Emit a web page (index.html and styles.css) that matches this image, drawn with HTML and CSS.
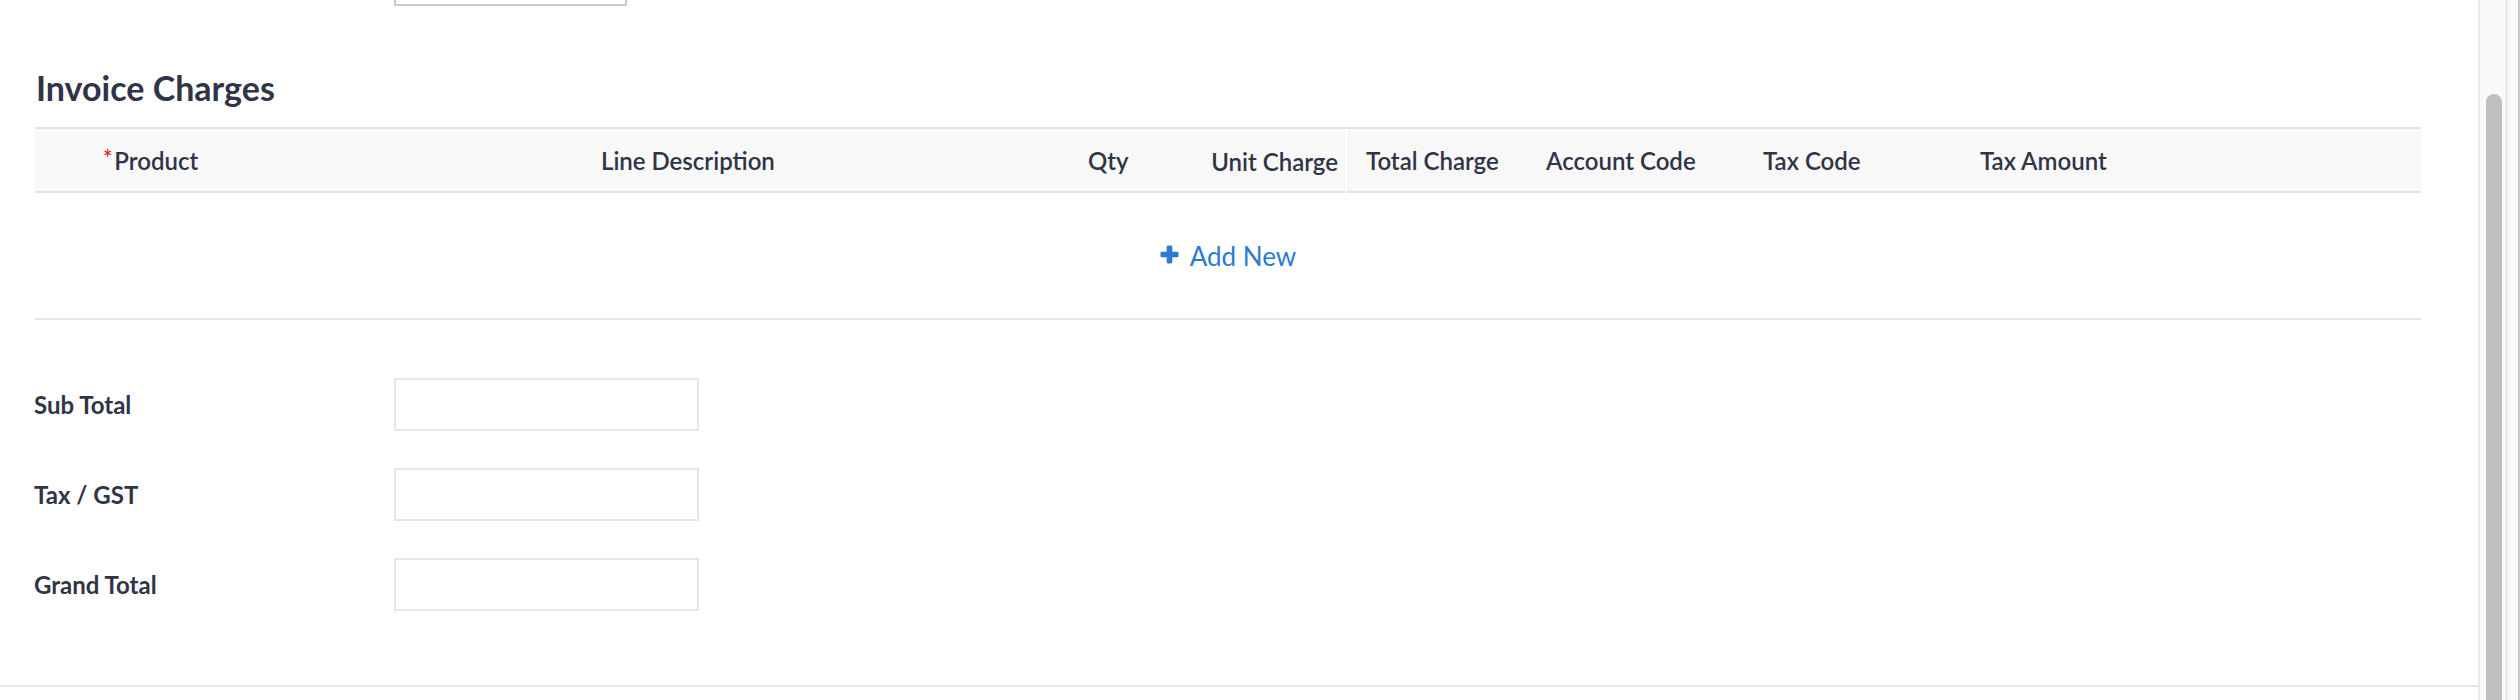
FILE: index.html
```html
<!DOCTYPE html>
<html lang="en">
<head>
    <meta charset="UTF-8">
    <meta name="viewport" content="width=device-width, initial-scale=1.0">
    <title>Invoice Charges</title>
    <link rel="stylesheet" href="styles.css">
</head>
<body>
    <div class="page">
        <div class="content">
            <div class="prev-field">
                <div class="prev-box"></div>
            </div>

            <h2 class="section-title">Invoice Charges</h2>

            <div class="charges">
                <div class="charges-head">
                    <div class="cell cell-product"><span class="required">*</span>Product</div>
                    <div class="cell">Line Description</div>
                    <div class="cell">Qty</div>
                    <div class="cell cell-unit">Unit Charge</div>
                    <div class="cell cell-total">Total Charge</div>
                    <div class="cell">Account Code</div>
                    <div class="cell">Tax Code</div>
                    <div class="cell">Tax Amount</div>
                </div>
                <div class="add-row">
                    <a class="add-new" href="#">
                        <svg class="plus" viewBox="0 0 20 20" width="19" height="19">
                            <rect x="7" y="0.5" width="6" height="19" rx="1.5" fill="currentColor"/>
                            <rect x="0.5" y="7" width="19" height="6" rx="1.5" fill="currentColor"/>
                        </svg>
                        Add New
                    </a>
                </div>
            </div>

            <div class="totals">
                <div class="total-row">
                    <label class="total-label">Sub Total</label>
                    <input class="total-input" type="text">
                </div>
                <div class="total-row">
                    <label class="total-label">Tax / GST</label>
                    <input class="total-input" type="text">
                </div>
                <div class="total-row">
                    <label class="total-label">Grand Total</label>
                    <input class="total-input" type="text">
                </div>
            </div>

            <div class="footer-line"></div>
        </div>

        <div class="scrollbar">
            <div class="scroll-track">
                <div class="scroll-thumb"></div>
            </div>
            <div class="scroll-edge"></div>
        </div>
    </div>
</body>
</html>
```

FILE: styles.css
```css
body {
    margin: 0;
    font-family: Lato, "Open Sans", sans-serif;
    color: #2f3447;
    background-color: #fff;
}

.page {
    display: flex;
    height: 700px;
    overflow: hidden;
}

.content {
    flex: 1;
    background-color: #fff;
}

.prev-field {
    padding-left: 394px;
}

.prev-box {
    width: 229px;
    height: 4px;
    border: 2px solid #cbcbcb;
    border-top: none;
}

.section-title {
    margin: 64px 0 21px 36px;
    font-size: 34px;
    line-height: 36px;
    font-weight: 700;
}

.charges {
    margin: 0 57px 0 35px;
}

.charges-head {
    display: grid;
    grid-template-columns: 566px 487px 125px 134px 199px 217px 217px 1fr;
    align-items: center;
    height: 62px;
    background-color: #f8f8f8;
    border-top: 2px solid #e2e2e2;
    border-bottom: 2px solid #e2e2e2;
    font-size: 24px;
    font-weight: 600;
}

.cell {
    white-space: nowrap;
}

.cell-product {
    padding-left: 68px;
}

.required {
    color: #e8231b;
    font-size: 22px;
    line-height: 24px;
    vertical-align: top;
    margin-right: 2px;
}

.cell-unit {
    align-self: stretch;
    display: flex;
    align-items: center;
    justify-content: flex-end;
    padding-right: 7px;
    border-right: 2px solid #fff;
    margin-bottom: -2px;
}

.cell-total {
    padding-left: 19px;
}

.add-row {
    display: flex;
    justify-content: center;
    align-items: center;
    height: 125px;
    border-bottom: 2px solid #e6e6e6;
}

.add-new {
    display: flex;
    align-items: center;
    gap: 11px;
    color: #2b7bd4;
    text-decoration: none;
    font-size: 26px;
}

.plus {
    margin-top: -2px;
}

.totals {
    display: flex;
    flex-direction: column;
    gap: 37px;
    padding: 58px 0 74px 34px;
}

.total-row {
    display: flex;
    align-items: center;
}

.total-label {
    width: 360px;
    font-size: 24px;
    font-weight: 700;
}

.total-input {
    box-sizing: border-box;
    width: 305px;
    height: 53px;
    margin: 0;
    border: 2px solid #e6e6e6;
    background-color: #fff;
    outline: none;
}

.footer-line {
    border-top: 2px solid #e6e6e6;
}

.scrollbar {
    display: flex;
    width: 40px;
    border-left: 2px solid #e8e8e8;
    background-color: #f9f9f9;
}

.scroll-track {
    width: 28px;
    padding: 94px 0 0 6px;
    box-sizing: border-box;
    border-right: 3px solid #ececec;
}

.scroll-thumb {
    width: 16px;
    height: 100%;
    background-color: #c1c1c1;
    border-radius: 8px 8px 0 0;
}

.scroll-edge {
    flex: 1;
    border-right: 2px solid #c8c8c8;
}
```
